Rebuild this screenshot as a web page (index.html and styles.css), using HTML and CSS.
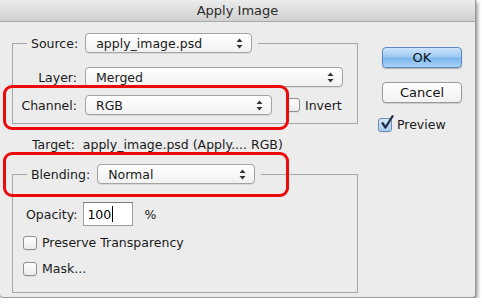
FILE: index.html
```html
<!DOCTYPE html>
<html>
<head>
<meta charset="utf-8">
<link rel="stylesheet" href="styles.css">
</head>
<body>
<div class="window">
  <div class="titlebar">Apply Image</div>
  <div class="content">
    <div class="left">
      <fieldset class="group group-source">
        <legend class="legend">
          <span class="legend-row">
            <span class="legend-label">Source:</span>
            <span class="select sel-source">apply_image.psd<svg class="arrows" width="7" height="11" viewBox="0 0 7 11"><path d="M3.5 0.5L6.5 4H0.5z M3.5 10.5L6.5 7H0.5z" fill="#333"/></svg></span>
          </span>
        </legend>
        <div class="rows">
          <div class="row">
            <span class="label">Layer:</span>
            <span class="select sel-layer">Merged<svg class="arrows" width="7" height="11" viewBox="0 0 7 11"><path d="M3.5 0.5L6.5 4H0.5z M3.5 10.5L6.5 7H0.5z" fill="#333"/></svg></span>
          </div>
          <div class="row">
            <span class="label">Channel:</span>
            <span class="select sel-channel">RGB<svg class="arrows" width="7" height="11" viewBox="0 0 7 11"><path d="M3.5 0.5L6.5 4H0.5z M3.5 10.5L6.5 7H0.5z" fill="#333"/></svg></span>
            <span class="check invert-check"><span class="box"></span><span class="check-label">Invert</span></span>
          </div>
        </div>
      </fieldset>
      <div class="target">Target:&nbsp; apply_image.psd (Apply.... RGB)</div>
      <fieldset class="group group-blend">
        <legend class="legend">
          <span class="legend-row">
            <span class="legend-label">Blending:</span>
            <span class="select sel-blend">Normal<svg class="arrows" width="7" height="11" viewBox="0 0 7 11"><path d="M3.5 0.5L6.5 4H0.5z M3.5 10.5L6.5 7H0.5z" fill="#333"/></svg></span>
          </span>
        </legend>
        <div class="opacity-row">
          <span class="opacity-label">Opacity:</span>
          <span class="input">100<span class="caret"></span></span>
          <span class="pct">%</span>
        </div>
        <div class="check-row"><span class="box"></span><span class="check-label">Preserve Transparency</span></div>
        <div class="check-row"><span class="box"></span><span class="check-label">Mask...</span></div>
      </fieldset>
    </div>
    <div class="right">
      <div class="btn btn-ok">OK</div>
      <div class="btn btn-cancel">Cancel</div>
      <div class="preview">
        <span class="box box-checked"><svg width="16" height="16" viewBox="0 0 16 16"><path d="M3 7.5L6.5 12.5L14 0.5" fill="none" stroke="#1f2a44" stroke-width="2.2" stroke-linejoin="round"/></svg></span>
        <span class="check-label">Preview</span>
      </div>
    </div>
    <div class="highlight hl-1"></div>
    <div class="highlight hl-2"></div>
  </div>
</div>
</body>
</html>
```
FILE: styles.css
```css
* { box-sizing: border-box; }
html, body { margin: 0; padding: 0; background: #ffffff; }
body {
  font-family: "DejaVu Sans", "Liberation Sans", sans-serif;
  font-size: 12.5px;
  color: #1a1a1a;
}
.window {
  width: 476px;
  height: 298px;
  background: #ececec;
  box-shadow: 1px 2px 4px rgba(0,0,0,0.55);
  position: relative;
  border-right: 1px solid #9a9a9a;
  border-bottom: 1px solid #9a9a9a;
  border-bottom-right-radius: 4px;
  border-bottom-left-radius: 4px;
}
.titlebar {
  height: 22px;
  line-height: 22px;
  text-align: center;
  font-size: 13px;
  color: #2a2a2a;
  background: linear-gradient(#ececec, #d0d0d0);
  border-bottom: 1px solid #a9a9a9;
}
.content {
  display: flex;
  position: relative;
}
.left {
  width: 346px;
  margin-left: 12px;
}
.group {
  margin: 0;
  border: 1px solid #a6a6a6;
  padding: 0;
  min-width: 0;
}
.group-source {
  margin-top: 11px;
  padding: 14px 0 8px 0;
}
.legend {
  margin-left: 14px;
  padding: 0 6px 0 4px;
}
.legend-row {
  display: flex;
  align-items: center;
  height: 20px;
}
.legend-label { margin-right: 7px; }
.select {
  display: inline-flex;
  align-items: center;
  position: relative;
  height: 20px;
  padding-left: 10px;
  border: 1px solid #a3a3a3;
  border-radius: 4px;
  background: linear-gradient(#ffffff, #f1f1f1);
  box-shadow: 0 1px 0 rgba(0,0,0,0.08);
}
.arrows {
  position: absolute;
  right: 8px;
  top: 4px;
}
.sel-source { width: 167px; }
.sel-layer { width: 258px; }
.sel-channel { width: 187px; }
.sel-blend { width: 158px; }
.rows {
  display: flex;
  flex-direction: column;
  gap: 8px;
}
.row {
  display: flex;
  align-items: center;
}
.label {
  width: 64px;
  text-align: right;
  margin-right: 8px;
}
.box {
  display: inline-block;
  width: 14px;
  height: 14px;
  border: 1px solid #8f8f8f;
  border-radius: 3px;
  background: linear-gradient(#ffffff, #ececec);
  box-shadow: 0 1px 0 rgba(0,0,0,0.06);
  position: relative;
}
.check { display: inline-flex; align-items: center; }
.invert-check { margin-left: 14px; }
.check-label { margin-left: 5px; }
.target {
  padding-left: 20px;
  height: 16px;
  line-height: 16px;
  margin-top: 13px;
  margin-bottom: 11px;
}
.group-blend {
  padding: 18px 0 16px 0;
}
.opacity-row {
  display: flex;
  align-items: center;
  padding-left: 13px;
}
.opacity-label { margin-right: 6px; }
.input {
  width: 50px;
  height: 24px;
  border: 1px solid #9c9c9c;
  border-top-color: #7c7c7c;
  background: #ffffff;
  display: inline-flex;
  align-items: center;
  padding-left: 3px;
  color: #000;
}
.caret {
  display: inline-block;
  width: 1px;
  height: 16px;
  background: #000;
  margin-left: 1px;
}
.pct { margin-left: 11px; }
.check-row {
  display: flex;
  align-items: center;
  padding-left: 10px;
  margin-top: 9px;
}
.check-row + .check-row { margin-top: 11px; }
.right {
  margin-left: 20px;
  padding-top: 25px;
  width: 86px;
}
.btn {
  width: 80px;
  height: 21px;
  margin-left: 4px;
  border-radius: 4px;
  text-align: center;
  line-height: 19px;
  font-size: 13px;
  color: #111;
}
.btn-ok {
  background: linear-gradient(#cde4fb 0%, #9ecaf3 45%, #7db8ee 55%, #a9d3f7 100%);
  border: 1px solid #5b86bf;
  box-shadow: 0 1px 1px rgba(0,0,0,0.25);
}
.btn-cancel {
  margin-top: 14px;
  background: linear-gradient(#ffffff, #f1f1f1);
  border: 1px solid #9b9b9b;
  box-shadow: 0 1px 1px rgba(0,0,0,0.15);
}
.preview {
  display: flex;
  align-items: center;
  margin-top: 14px;
}
.box-checked {
  background: linear-gradient(#d6e8fa, #a5cbef);
  border-color: #6d8db5;
}
.box-checked svg {
  position: absolute;
  left: 0px;
  top: -4px;
}
.highlight {
  position: absolute;
  left: 3px;
  width: 286px;
  border: 3px solid #ec0a0a;
  border-radius: 9px;
}
.hl-1 { top: 63px; height: 45px; }
.hl-2 { top: 130px; height: 45px; }
```
